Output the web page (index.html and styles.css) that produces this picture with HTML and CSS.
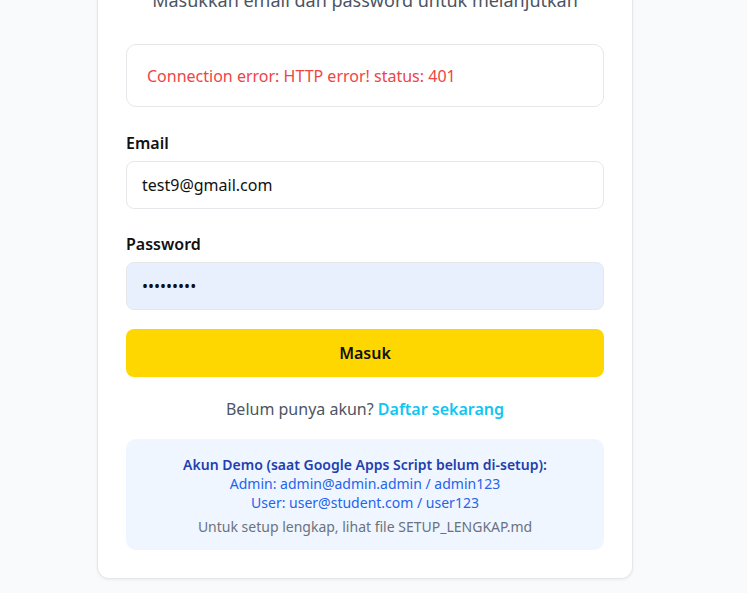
FILE: index.html
```html
<!DOCTYPE html>
<html lang="id">
<head>
<meta charset="utf-8">
<title>Masuk</title>
<link rel="stylesheet" href="styles.css">
</head>
<body>
<main class="page">
  <section class="card">
    <p class="subtitle">Masukkan email dan password untuk melanjutkan</p>
    <div class="alert">Connection error: HTTP error! status: 401</div>
    <form class="form">
      <div class="field">
        <label class="label" for="email">Email</label>
        <input class="input" id="email" type="email" value="test9@gmail.com">
      </div>
      <div class="field">
        <label class="label" for="password">Password</label>
        <input class="input input-filled" id="password" type="password" value="123456789">
      </div>
      <button class="btn" type="button">Masuk</button>
    </form>
    <p class="signup">Belum punya akun? <a class="signup-link" href="#">Daftar sekarang</a></p>
    <div class="demo">
      <p class="demo-title">Akun Demo (saat Google Apps Script belum di-setup):</p>
      <p class="demo-line">Admin: admin@admin.admin / admin123</p>
      <p class="demo-line">User: user@student.com / user123</p>
      <p class="demo-note">Untuk setup lengkap, lihat file SETUP_LENGKAP.md</p>
    </div>
  </section>
</main>
</body>
</html>
```
FILE: styles.css
```css
* { box-sizing: border-box; }
html, body { margin: 0; padding: 0; }
body {
  background: #f9fafb;
  font-family: "Noto Sans", "Open Sans", sans-serif;
  color: #111827;
  height: 593px;
  overflow: hidden;
}
.page {
  display: flex;
  justify-content: center;
  padding-right: 17px;
}
.card {
  width: 536px;
  margin-top: -17px;
  background: #fff;
  border: 1px solid #e5e7eb;
  border-top: none;
  border-radius: 0 0 12px 12px;
  box-shadow: 0 1px 3px rgba(0,0,0,0.06);
  padding: 0 28px 28px;
}
.subtitle {
  margin: 0 0 27px;
  text-align: center;
  font-size: 18px;
  line-height: 34px;
  color: #4b5563;
}
.alert {
  height: 63px;
  border: 1px solid #e5e7eb;
  border-radius: 10px;
  padding: 0 20px;
  display: flex;
  align-items: center;
  color: #ef4444;
  font-size: 16px;
  margin-bottom: 24px;
}
.form { display: flex; flex-direction: column; }
.field { display: flex; flex-direction: column; margin-bottom: 23px; }
.field:last-of-type { margin-bottom: 19px; }
.label {
  font-size: 16px;
  font-weight: 600;
  line-height: 24px;
  margin-bottom: 6px;
  color: #111;
}
.input {
  height: 48px;
  border: 1px solid #e5e7eb;
  border-radius: 8px;
  padding: 0 15px;
  font: inherit;
  font-size: 16px;
  color: #111;
  background: #fff;
  outline: none;
}
.input-filled { background: #e8f0fe; }
.btn {
  height: 48px;
  border: none;
  border-radius: 8px;
  background: #ffd700;
  font: inherit;
  font-size: 16px;
  font-weight: 600;
  color: #111;
}
.signup {
  margin: 20px 0 18px;
  text-align: center;
  font-size: 16px;
  line-height: 24px;
  color: #4b5563;
}
.signup-link {
  color: #0ec6f4;
  font-weight: 600;
  text-decoration: none;
}
.demo {
  background: #eff6ff;
  border-radius: 10px;
  padding: 16px 16px 14px;
  text-align: center;
  font-size: 14px;
  line-height: 19px;
}
.demo p { margin: 0; }
.demo-title { color: #1e40af; font-weight: 600; }
.demo-line { color: #2563eb; }
.demo-note { color: #6b7280; margin-top: 5px !important; }
```
